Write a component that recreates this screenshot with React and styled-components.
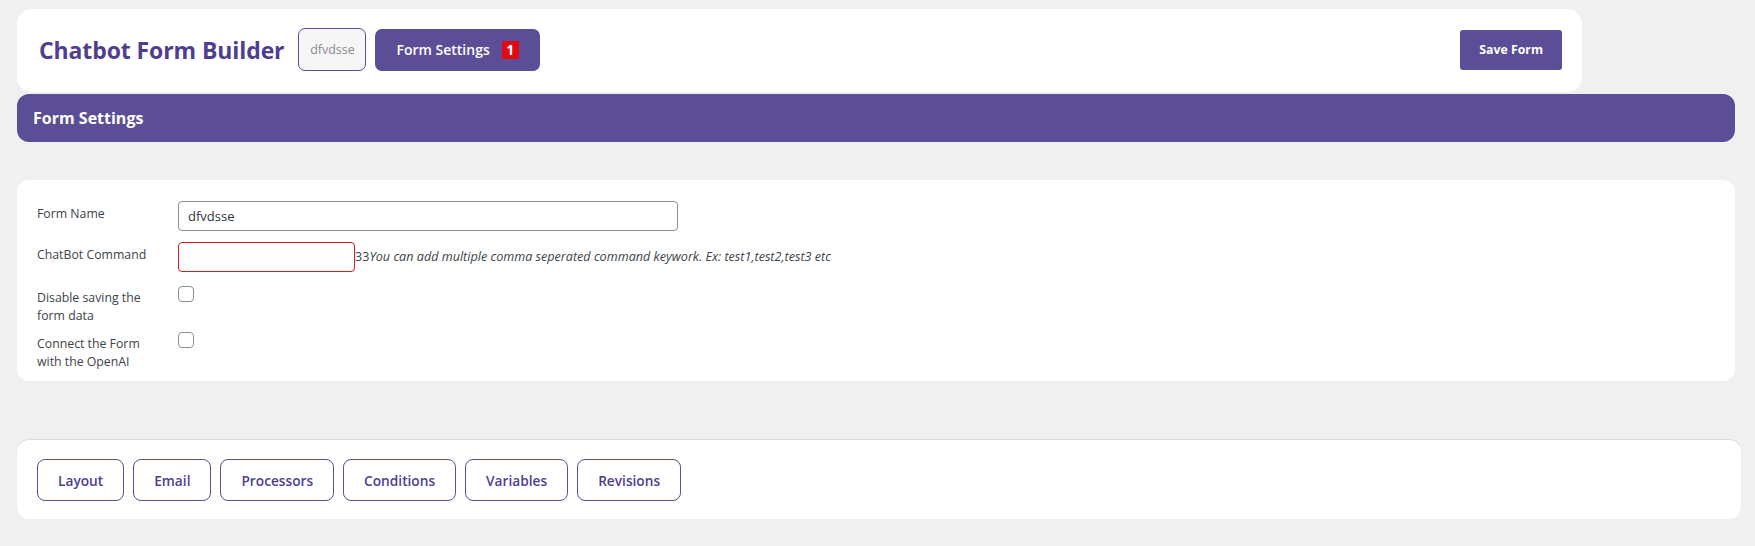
import React from "react";
import styled, { createGlobalStyle } from "styled-components";

const PURPLE = "#5c4e96";
const TITLE = "#4f3e8f";

const Global = createGlobalStyle`
  html, body { margin: 0; padding: 0; background: #f0f0f1; }
  body { font-family: "Open Sans", "Noto Sans", sans-serif; color: #3c434a; }
  * { box-sizing: border-box; }
`;

const Page = styled.div`
  padding: 9px 20px 26px 17px;
  display: flex;
  flex-direction: column;
`;

const Header = styled.header`
  width: 1565px;
  height: 83px;
  background: #fff;
  border-radius: 15px;
  display: flex;
  align-items: center;
  padding: 0 20px 2px 22px;
`;

const Title = styled.h1`
  margin: 0 14px 0 0;
  font-family: "Open Sans", sans-serif;
  font-weight: 700;
  font-size: 23px;
  color: ${TITLE};
  letter-spacing: -0.1px;
`;

const NameChip = styled.div`
  width: 68px;
  height: 43px;
  border: 1px solid ${PURPLE};
  border-radius: 7px;
  background: #f6f6f7;
  color: #8a8a8e;
  font-size: 12.5px;
  display: flex;
  align-items: center;
  justify-content: center;
  margin-right: 9px;
`;

const PrimaryButton = styled.button`
  height: ${(p) => p.$h}px;
  padding: 0 ${(p) => p.$px}px;
  background: ${PURPLE};
  color: #fff;
  border: none;
  border-radius: ${(p) => p.$r}px;
  font-family: "Open Sans", sans-serif;
  font-size: ${(p) => p.$fs}px;
  font-weight: ${(p) => p.$fw};
  display: flex;
  align-items: center;
  gap: 12px;
  cursor: pointer;
`;

const Badge = styled.span`
  background: #e10a14;
  color: #fff;
  font-size: 14px;
  font-weight: 700;
  width: 17px;
  height: 18px;
  display: inline-flex;
  align-items: center;
  justify-content: center;
`;

const Spacer = styled.div`
  flex: 1;
`;

const Bar = styled.div`
  margin-top: 2px;
  height: 48px;
  background: ${PURPLE};
  border-radius: 12px;
  color: #fff;
  font-weight: 700;
  font-size: 16px;
  display: flex;
  align-items: center;
  padding-left: 16px;
`;

const Card = styled.section`
  margin-top: ${(p) => p.$mt}px;
  margin-right: ${(p) => p.$mr || 0}px;
  background: #fff;
  border-radius: 12px;
  box-shadow: ${(p) => (p.$shadow ? "0 -1px 1px rgba(0,0,0,0.09)" : "none")};
  padding: ${(p) => p.$pad};
`;

const Row = styled.div`
  display: flex;
  align-items: flex-start;
  margin-bottom: ${(p) => p.$mb}px;
`;

const Label = styled.label`
  width: 141px;
  padding-right: 20px;
  flex-shrink: 0;
  font-size: 12.3px;
  line-height: 18px;
  color: #3c434a;
  padding-top: ${(p) => p.$pt}px;
`;

const TextInput = styled.input`
  width: ${(p) => p.$w}px;
  height: 30px;
  border: 1px solid ${(p) => (p.$error ? "#e01b1b" : "#8c8f94")};
  border-radius: 4px;
  padding: 0 9px;
  font-family: "Open Sans", sans-serif;
  font-size: 13px;
  color: #2c3338;
  outline: none;
`;

const Help = styled.span`
  font-size: 12.6px;
  color: #3c434a;
  line-height: 30px;
  em {
    font-style: italic;
  }
`;

const Check = styled.input.attrs({ type: "checkbox" })`
  appearance: none;
  width: 16px;
  height: 16px;
  margin: ${(p) => p.$mt}px 0 0 0;
  border: 1px solid #8c8f94;
  border-radius: 4px;
  background: #fff;
`;

const Tabs = styled.div`
  display: flex;
  gap: 9px;
`;

const Tab = styled.button`
  height: 42px;
  padding: 0 20px;
  background: #fff;
  border: 1px solid ${PURPLE};
  border-radius: 8px;
  color: ${TITLE};
  font-family: "Open Sans", sans-serif;
  font-size: 13.7px;
  font-weight: 600;
  cursor: pointer;
`;

const tabs = ["Layout", "Email", "Processors", "Conditions", "Variables", "Revisions"];

export default function App() {
  return (
    <>
      <Global />
      <Page>
        <Header>
          <Title>Chatbot Form Builder</Title>
          <NameChip>dfvdsse</NameChip>
          <PrimaryButton $h={42} $px={21} $r={7} $fs={14} $fw={600}>
            Form Settings <Badge>1</Badge>
          </PrimaryButton>
          <Spacer />
          <PrimaryButton $h={40} $px={19} $r={3} $fs={12.3} $fw={700}>
            Save Form
          </PrimaryButton>
        </Header>
        <Bar>Form Settings</Bar>
        <Card $mt={38} $pad="21px 20px 10px">
          <Row $mb={11}>
            <Label $pt={4}>Form Name</Label>
            <TextInput $w={500} defaultValue="dfvdsse" />
          </Row>
          <Row $mb={11}>
            <Label $pt={4}>ChatBot Command</Label>
            <TextInput $w={177} $error />
            <Help>
              33<em>You can add multiple comma seperated command keywork. Ex: test1,test2,test3 etc</em>
            </Help>
          </Row>
          <Row $mb={4}>
            <Label $pt={6}>Disable saving the form data</Label>
            <Check $mt={3} />
          </Row>
          <Row $mb={0}>
            <Label $pt={6}>Connect the Form with the OpenAI</Label>
            <Check $mt={3} />
          </Row>
        </Card>
        <Card $mt={59} $mr={-6} $shadow $pad="19px 20px 18px">
          <Tabs>
            {tabs.map((t) => (
              <Tab key={t}>{t}</Tab>
            ))}
          </Tabs>
        </Card>
      </Page>
    </>
  );
}
